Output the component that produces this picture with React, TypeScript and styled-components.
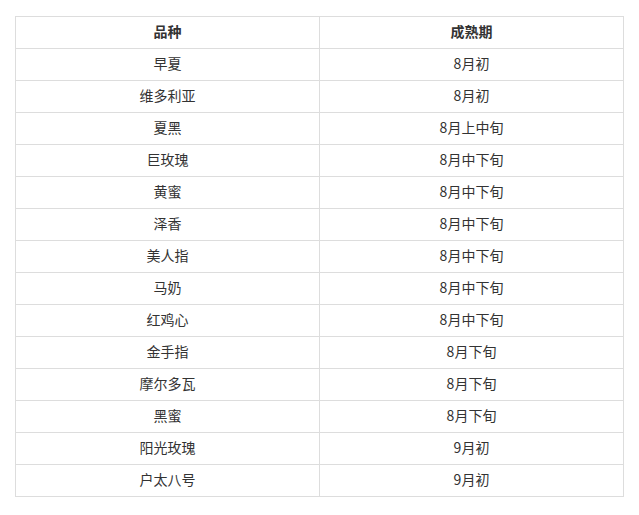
import styled, { createGlobalStyle } from "styled-components";

const GlobalStyle = createGlobalStyle`
  body {
    margin: 0;
    background: #fff;
    font-family: "Noto Sans CJK SC", "Noto Sans", sans-serif;
  }
`;

const Page = styled.div({
  padding: "16px 0 0 15px",
});

const Table = styled.div({
  display: "grid",
  gridTemplateColumns: "304px 304px",
  width: 609,
  borderLeft: "1px solid #dddddd",
  borderTop: "1px solid #dddddd",
  boxSizing: "border-box",
});

const Cell = styled.div<{ $head?: boolean }>({
  height: 32,
  boxSizing: "border-box",
  borderRight: "1px solid #dddddd",
  borderBottom: "1px solid #dddddd",
  paddingBottom: 3,
  display: "flex",
  alignItems: "center",
  justifyContent: "center",
  fontSize: 14,
  lineHeight: "20px",
  color: "#333333",
}, (p) => ({
  fontWeight: p.$head ? "bold" : "normal",
}));

const rows: [string, string][] = [
  ["早夏", "8月初"],
  ["维多利亚", "8月初"],
  ["夏黑", "8月上中旬"],
  ["巨玫瑰", "8月中下旬"],
  ["黄蜜", "8月中下旬"],
  ["泽香", "8月中下旬"],
  ["美人指", "8月中下旬"],
  ["马奶", "8月中下旬"],
  ["红鸡心", "8月中下旬"],
  ["金手指", "8月下旬"],
  ["摩尔多瓦", "8月下旬"],
  ["黑蜜", "8月下旬"],
  ["阳光玫瑰", "9月初"],
  ["户太八号", "9月初"],
];

export default function App() {
  return (
    <Page>
      <GlobalStyle />
      <Table>
        <Cell $head>品种</Cell>
        <Cell $head>成熟期</Cell>
        {rows.map(([name, time]) => (
          <>
            <Cell key={name + "-n"}>{name}</Cell>
            <Cell key={name + "-t"}>{time}</Cell>
          </>
        ))}
      </Table>
    </Page>
  );
}
